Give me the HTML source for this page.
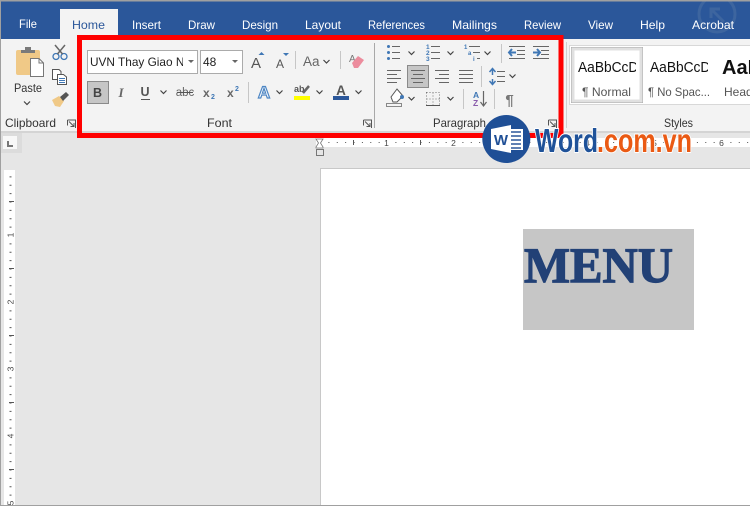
<!DOCTYPE html>
<html><head><meta charset="utf-8"><style>
html,body{margin:0;padding:0;width:750px;height:506px;overflow:hidden;background:#e6e6e6}
svg{display:block;font-family:"Liberation Sans",sans-serif}
.t{fill:#fff;font-size:12px}
.l{fill:#333;font-size:12px}
.c{fill:none;stroke:#444;stroke-width:1.2}
.g{stroke:#666;stroke-width:1;fill:none}
.s{stroke:#c6c6c6;stroke-width:1}
</style></head><body>
<svg width="750" height="506" viewBox="0 0 750 506" xmlns="http://www.w3.org/2000/svg" shape-rendering="auto">
<defs><path id="ch" d="M-3-1.500 0 1.500 3-1.500" fill="none" stroke="#444" stroke-width="1.200"/>
<path id="ln" d="M0 .5H14M0 4.500H10M0 8.500H14M0 12.500H10" fill="none" stroke="#666"/>
<path id="lau" d="M.5.500H8.500V8.500M.5.500V6M2 2 7 7M7 3.500V7H3.500" fill="none" stroke="#555"/>
</defs>
<rect width="750" height="506" fill="#e6e6e6"/>
<!-- title/tab bar -->
<rect x="0" y="1" width="750" height="38" fill="#2b579a"/>
<g fill="none" stroke="#3d659f" stroke-width="3"><circle cx="717" cy="14" r="18"/><path d="M724 22 711 9M711 18V9H720"/></g>
<rect x="60" y="9" width="58" height="31" fill="#f3f3f3"/>
<text class="t" x="19" y="28" textLength="18" lengthAdjust="spacingAndGlyphs">File</text>
<text x="72" y="29" font-size="12" fill="#2b579a" textLength="33" lengthAdjust="spacingAndGlyphs">Home</text>
<text class="t" x="132" y="29" textLength="29" lengthAdjust="spacingAndGlyphs">Insert</text>
<text class="t" x="188" y="29" textLength="27" lengthAdjust="spacingAndGlyphs">Draw</text>
<text class="t" x="242" y="29" textLength="36" lengthAdjust="spacingAndGlyphs">Design</text>
<text class="t" x="305" y="29" textLength="36" lengthAdjust="spacingAndGlyphs">Layout</text>
<text class="t" x="368" y="29" textLength="57" lengthAdjust="spacingAndGlyphs">References</text>
<text class="t" x="452" y="29" textLength="45" lengthAdjust="spacingAndGlyphs">Mailings</text>
<text class="t" x="524" y="29" textLength="37" lengthAdjust="spacingAndGlyphs">Review</text>
<text class="t" x="588" y="29" textLength="25" lengthAdjust="spacingAndGlyphs">View</text>
<text class="t" x="640" y="29" textLength="25" lengthAdjust="spacingAndGlyphs">Help</text>
<text class="t" x="692" y="29" textLength="42" lengthAdjust="spacingAndGlyphs">Acrobat</text>
<!-- ribbon -->
<rect x="0" y="39" width="750" height="92" fill="#f3f3f3"/>
<rect x="0" y="131" width="750" height="2" fill="#d4d4d4"/>
<!-- clipboard group -->
<rect x="16" y="50" width="24" height="25" rx="2" fill="#f0c987"/>
<path d="M21 53V50H25V47H31V50H35V53Z" fill="#7a7a7a"/>
<path d="M30.500 58.500H39L43.500 63V76.500H30.500Z" fill="#fff" stroke="#777"/><path d="M39 58.500V63H43.500" fill="none" stroke="#777"/>
<text x="14" y="92" font-size="12" fill="#333" textLength="28" lengthAdjust="spacingAndGlyphs">Paste</text>
<use href="#ch" x="27" y="103"/>
<g fill="none"><circle cx="56" cy="56.500" r="3" stroke="#3f77b5" stroke-width="1.300"/><circle cx="64" cy="56.500" r="3" stroke="#3f77b5" stroke-width="1.300"/><path d="M55 45 62.500 54M65 45 57.500 54" stroke="#666" stroke-width="1.500"/></g>
<path d="M52.500 69.500H59L61 71.500V79.500H52.500Z" fill="#fff" stroke="#555"/><path d="M57.500 74.500H63.500L66.500 77V84.500H57.500Z" fill="#fff" stroke="#555"/><path d="M59 78.500H65M59 80.500H65M59 82.500H65" stroke="#3f77b5"/>
<path d="M52 100 59 96 64 101 60 107 55 106Z" fill="#f0c987"/><path d="M60 97 66 92 69 95 63 101Z" fill="#555"/>
<text class="l" x="5" y="127" textLength="51" lengthAdjust="spacingAndGlyphs">Clipboard</text>
<use href="#lau" x="67" y="119.500"/>
<!-- font group -->
<rect x="87.500" y="50.500" width="110" height="23" fill="#fff" stroke="#ababab"/>
<svg x="90" y="52" width="93" height="20"><text x="0" y="14" font-size="12" fill="#222" textLength="97" lengthAdjust="spacingAndGlyphs">UVN Thay Giao Ni</text></svg>
<path d="M188 60h6l-3 3z" fill="#666"/>
<rect x="200.500" y="50.500" width="42" height="23" fill="#fff" stroke="#ababab"/>
<text x="203" y="66" font-size="12" fill="#222">48</text>
<path d="M232 60h6l-3 3z" fill="#666"/>
<rect x="87.500" y="81.500" width="21" height="22" fill="#c6c6c6" stroke="#8a8a8a"/>
<text x="97.500" y="97" font-size="12.500" font-weight="bold" fill="#444" text-anchor="middle">B</text>
<text x="121" y="97" font-size="13" font-style="italic" font-weight="bold" fill="#666" text-anchor="middle" font-family="Liberation Serif">I</text>
<text x="145" y="96" font-size="12.500" font-weight="bold" fill="#555" text-anchor="middle">U</text><path d="M141 99.500H150" stroke="#555"/>
<use href="#ch" x="163.500" y="92"/>
<text x="185" y="96" font-size="11.500" fill="#666" text-anchor="middle">abc</text><path d="M177 92.500H193" stroke="#555"/>
<text x="203" y="97" font-size="12" font-weight="bold" fill="#666">x</text><text x="211" y="99" font-size="7" font-weight="bold" fill="#3f77b5">2</text>
<text x="227" y="97" font-size="12" font-weight="bold" fill="#666">x</text><text x="235" y="91" font-size="7" font-weight="bold" fill="#3f77b5">2</text>
<text x="251" y="68" font-size="15" fill="#555">A</text><path d="M258.500 55h6l-3-3z" fill="#3f77b5"/>
<text x="276" y="68" font-size="12" fill="#555">A</text><path d="M283 53h6l-3 3z" fill="#3f77b5"/>
<path d="M295.500 51V69" class="s"/>
<text x="303" y="66" font-size="13.500" fill="#666">Aa</text><use href="#ch" x="326.500" y="61.500"/>
<path d="M340.500 51V69" class="s"/>
<text x="349" y="62" font-size="10" fill="#777">A</text>
<path d="M352 63 358 56 364 60 358 68 354 68Z" fill="#ec8c9d"/>
<path d="M248.500 82V103" class="s"/>
<text x="264" y="98" font-size="17" font-weight="bold" fill="#fff" stroke="#4d86c4" stroke-width="1.200" text-anchor="middle">A</text>
<use href="#ch" x="279.500" y="92"/>
<text x="294" y="92" font-size="9" font-weight="bold" fill="#555">ab</text><path d="M303 93 309 86" stroke="#666" stroke-width="2.500"/>
<rect x="294" y="96" width="16" height="4" fill="#ff0"/>
<use href="#ch" x="319.500" y="92"/>
<text x="341" y="95" font-size="13.500" font-weight="bold" fill="#555" text-anchor="middle">A</text>
<rect x="333" y="96" width="16" height="4" fill="#2b579a"/>
<use href="#ch" x="358.500" y="92"/>
<text class="l" x="207" y="127" textLength="25" lengthAdjust="spacingAndGlyphs">Font</text>
<use href="#lau" x="363" y="119.500"/>
<path d="M374.500 43V128" stroke="#a8a8a8"/>
<!-- paragraph group -->
<g fill="#3f77b5"><circle cx="388.500" cy="46.500" r="1.500"/><circle cx="388.500" cy="52.500" r="1.500"/><circle cx="388.500" cy="58.500" r="1.500"/></g>
<path d="M392 46.500H400M392 52.500H400M392 58.500H400" class="g"/><use href="#ch" x="411.500" y="53"/>
<g fill="#3f77b5" font-size="6.500" font-weight="bold"><text x="426" y="49">1</text><text x="426" y="55">2</text><text x="426" y="61">3</text></g>
<path d="M431 46.500H440M431 52.500H440M431 58.500H440" class="g"/><use href="#ch" x="450.500" y="53"/>
<g fill="#3f77b5" font-size="6" font-weight="bold"><text x="464" y="49">1</text><text x="468" y="55">a</text><text x="473" y="61">i</text></g>
<path d="M469 46.500H480M473 52.500H480M477 58.500H480" class="g"/><use href="#ch" x="487.500" y="53"/>
<path d="M501.500 44V63" class="s"/>
<path d="M509 52.500H516M512 49 509 52.500 512 56" fill="none" stroke="#3f77b5" stroke-width="2"/><path d="M509 46.500H525M517 50.500H525M517 54.500H525M509 58.500H525" class="g"/>
<path d="M533 52.500H540M537 49 540 52.500 537 56" fill="none" stroke="#3f77b5" stroke-width="2"/><path d="M533 46.500H549M541 50.500H549M541 54.500H549M533 58.500H549" class="g"/>
<use href="#ln" x="387" y="70"/>
<rect x="407.500" y="65.500" width="21" height="22" fill="#c6c6c6" stroke="#8a8a8a"/>
<path d="M411 70.500H425M413 74.500H423M411 78.500H425M413 82.500H423" class="g"/>
<path d="M435 70.500H449M439 74.500H449M435 78.500H449M439 82.500H449" class="g"/>
<path d="M459 70.500H473M459 74.500H473M459 78.500H473M459 82.500H473" class="g"/>
<path d="M481.500 66V87" class="s"/>
<path d="M492.500 69V75M492.500 79V85M489.500 72 492.500 68.500 495.500 72M489.500 81 492.500 84.500 495.500 81" fill="none" stroke="#3f77b5" stroke-width="1.500"/>
<path d="M497 71.500H505M497 76.500H505M497 81.500H505" class="g"/><use href="#ch" x="512.500" y="76"/>
<path d="M391 97 397 89 403 96 397 102H393Z" fill="#fff" stroke="#555"/><circle cx="402" cy="97" r="2" fill="#3f77b5"/>
<rect x="386.500" y="103.500" width="15" height="3" fill="#f3f3f3" stroke="#888"/>
<use href="#ch" x="411.500" y="98.500"/>
<path d="M426.500 92.500H439.500V105.500H426.500ZM433 92.500V105.500M426.500 99H439.500" fill="none" stroke="#777" stroke-dasharray="1 2" shape-rendering="crispEdges"/><path d="M426 105.500H440" stroke="#555"/>
<use href="#ch" x="450.500" y="98.500"/>
<path d="M463.500 89V109" class="s"/>
<text x="473" y="98" font-size="8.500" font-weight="bold" fill="#3f77b5">A</text><text x="473" y="106" font-size="8.500" font-weight="bold" fill="#8a5cab">Z</text>
<path d="M483.500 91V105M480.500 102 483.500 106 486.500 102" fill="none" stroke="#666" stroke-width="1.200"/>
<path d="M494.500 89V109" class="s"/>
<text x="509.500" y="105" font-size="15" font-weight="bold" fill="#777" text-anchor="middle">¶</text>
<text class="l" x="433" y="127" textLength="53" lengthAdjust="spacingAndGlyphs">Paragraph</text>
<use href="#lau" x="548" y="119.500"/>
<!-- styles -->
<path d="M566.500 42V128" stroke="#d0d0d0"/>
<rect x="569.500" y="45.500" width="181" height="59" fill="#fff" stroke="#d8d8d8"/>
<rect x="572" y="48" width="70" height="54" fill="#fff" stroke="#a8a8a8" stroke-width="2"/>
<rect x="573" y="49" width="68" height="52" fill="none" stroke="#e0e0e0" stroke-width="3"/>
<svg x="577" y="55" width="59" height="22"><text x="1" y="17" font-size="15" fill="#111" textLength="68" lengthAdjust="spacingAndGlyphs">AaBbCcDd</text></svg>
<text x="582" y="96" font-size="12" fill="#555" textLength="49" lengthAdjust="spacingAndGlyphs">¶ Normal</text>
<svg x="649" y="55" width="59" height="22"><text x="1" y="17" font-size="15" fill="#111" textLength="68" lengthAdjust="spacingAndGlyphs">AaBbCcDd</text></svg>
<text x="648" y="96" font-size="12" fill="#555" textLength="62" lengthAdjust="spacingAndGlyphs">¶ No Spac...</text>
<svg x="721" y="55" width="29" height="24"><text x="1" y="19" font-size="20" font-weight="bold" fill="#111">AaB</text></svg>
<text x="724" y="96" font-size="12" fill="#555">Headi</text>
<text class="l" x="664" y="127" textLength="29" lengthAdjust="spacingAndGlyphs">Styles</text>
<!-- red frame -->
<rect x="79.500" y="37.500" width="481.500" height="98" fill="none" stroke="#f00" stroke-width="5"/>
<!-- ruler corner -->
<rect x="1" y="133" width="21" height="20" fill="#dcdcdc"/><rect x="3" y="136" width="14" height="13" fill="#f8f8f8"/>
<path d="M8 141V146H13" fill="none" stroke="#777" stroke-width="2"/>
<!-- horizontal ruler -->
<rect x="316" y="138" width="434" height="9" fill="#fff"/>
<path d="M328.400 142.500H750" stroke="#555" stroke-dasharray="1 7.375"/>
<g stroke="#555"><path d="M353.500 140V145M420.500 140V145M487.500 140V145M554.500 140V145M621.500 140V145M688.500 140V145"/></g>
<g fill="#fff"><rect x="383" y="139" width="7" height="7"/><rect x="450" y="139" width="7" height="7"/><rect x="517" y="139" width="7" height="7"/><rect x="584" y="139" width="7" height="7"/><rect x="651" y="139" width="7" height="7"/><rect x="718" y="139" width="7" height="7"/></g>
<g font-size="8.500" fill="#444" text-anchor="middle"><text x="386.500" y="146">1</text><text x="453.500" y="146">2</text><text x="520.500" y="146">3</text><text x="587.500" y="146">4</text><text x="654.500" y="146">5</text><text x="721.500" y="146">6</text></g>
<path d="M316 139H323L320.500 143 323 147V148H316V147L318.500 143Z" fill="#fff" stroke="#777" stroke-width=".8"/>
<rect x="316.500" y="149.500" width="7" height="6" fill="#e6e6e6" stroke="#777"/>
<!-- vertical ruler -->
<rect x="4" y="170" width="11" height="336" fill="#fff"/>
<path d="M10.500 176.400V506" stroke="#555" stroke-dasharray="1 7.375" stroke-width="2"/>
<g stroke="#555"><path d="M9 201.500H14M9 268.500H14M9 335.500H14M9 402.500H14M9 469.500H14"/></g>
<g fill="#fff"><rect x="6" y="232" width="8" height="7"/><rect x="6" y="299" width="8" height="7"/><rect x="6" y="366" width="8" height="7"/><rect x="6" y="433" width="8" height="7"/><rect x="6" y="500" width="8" height="6"/></g>
<g font-size="8.500" fill="#444" text-anchor="middle">
<text transform="translate(13.500 235) rotate(-90)">1</text><text transform="translate(13.500 302) rotate(-90)">2</text><text transform="translate(13.500 369) rotate(-90)">3</text><text transform="translate(13.500 436) rotate(-90)">4</text><text transform="translate(13.500 503) rotate(-90)">5</text></g>
<!-- page -->
<rect x="320.500" y="168.500" width="431" height="340" fill="#fff" stroke="#c8c8c8"/>
<rect x="523" y="229" width="171" height="101" fill="#c6c6c6"/>
<text x="524" y="282" font-family="Liberation Serif" font-size="50" font-weight="bold" fill="#224176" stroke="#224176" stroke-width="1.200" textLength="149" lengthAdjust="spacingAndGlyphs">MENU</text>
<!-- logo -->
<circle cx="506.300" cy="139" r="24" fill="#1f4f96"/>
<path d="M505 129H523V150H505Z" fill="#fff"/><path d="M511 132H521M511 136H521M511 140H521M511 144H521M511 148H521" stroke="#2b579a" stroke-width="1.500"/>
<path d="M491 129 511 125V153L491 149Z" fill="#fff"/>
<text x="501" y="145" font-size="15" font-weight="bold" fill="#1f4f96" text-anchor="middle">W</text>
<g font-size="33" font-weight="bold" stroke="#fff" stroke-width="2" paint-order="stroke" stroke-linejoin="round">
<text x="535" y="152" fill="#1f5299" textLength="63" lengthAdjust="spacingAndGlyphs">Word</text>
<text x="597" y="152" fill="#ea5a14" textLength="95" lengthAdjust="spacingAndGlyphs">.com.vn</text></g>
<!-- window edges -->
<rect x="0" y="0" width="750" height="1.500" fill="#a0a0a0"/>
<rect x="0" y="0" width="1" height="506" fill="#a0a0a0"/>
<rect x="0" y="505" width="750" height="1" fill="#a0a0a0"/>
</svg>
</body></html>
